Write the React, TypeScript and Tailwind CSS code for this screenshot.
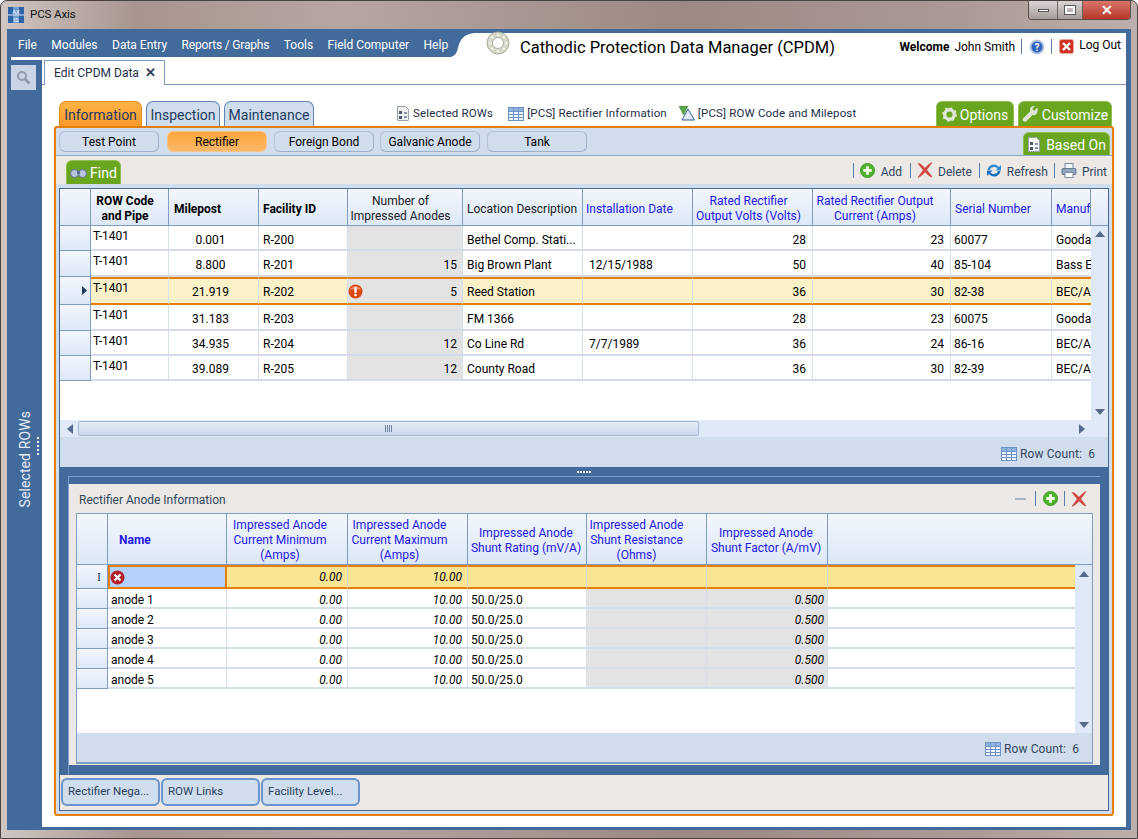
import { ReactNode } from "react";

const topCols = "grid grid-cols-[31px_78px_90px_89px_115px_120px_110px_120px_138px_101px_39px]";
const topHead = "grid grid-cols-[31px_78px_90px_89px_115px_120px_110px_120px_138px_101px_39px_17px]";
const lowCols = "grid grid-cols-[31px_119px_121px_120px_119px_120px_121px_247px]";
const lowHead = "grid grid-cols-[31px_119px_121px_120px_119px_120px_121px_264px]";

const headBg = "bg-[linear-gradient(#f2f6fd,#dde8f7)]";

function Tri({ dir, className = "" }: { dir: "up" | "down" | "left" | "right"; className?: string }) {
  const pts = { up: "0,7 5,1 10,7", down: "0,1 5,7 10,1", left: "8,0 8,10 2,5", right: "2,0 2,10 8,5" }[dir];
  return (
    <svg width="10" height="10" viewBox="0 0 10 10" className={className}>
      <polygon points={pts} fill="#56698a" />
    </svg>
  );
}

function GridIcon({ size = 16 }: { size?: number }) {
  return (
    <svg width={size} height={size - 2} viewBox="0 0 16 14">
      <rect x="0.5" y="0.5" width="15" height="13" fill="#eef4fc" stroke="#6f93c4" />
      <rect x="1" y="1" width="14" height="3" fill="#8fb4e0" />
      <path d="M5.5 1v12M10.5 1v12M1 4.5h14M1 7.5h14M1 10.5h14" stroke="#6f93c4" />
    </svg>
  );
}

function DocIcon({ light = false }: { light?: boolean }) {
  return (
    <svg width="14" height="15" viewBox="0 0 14 15">
      <path d="M1.5.5h8l3 3v11h-11z" fill={light ? "#f4f6f8" : "#eef0f2"} stroke="#9aa3ad" />
      <rect x="3" y="5" width="3" height="3" fill="#4d5a68" />
      <rect x="3" y="10" width="3" height="3" fill="#4d5a68" />
      <rect x="8" y="6" width="3" height="2" fill="#8b96a3" />
      <rect x="8" y="10" width="3" height="2" fill="#8b96a3" />
    </svg>
  );
}

function PlusIcon({ size = 15 }: { size?: number }) {
  return (
    <svg width={size} height={size} viewBox="0 0 16 16">
      <circle cx="8" cy="8" r="7.500" fill="#4fb02e" stroke="#3f9a26" />
      <path d="M8 3.500v9M3.500 8h9" stroke="#eefae6" strokeWidth="3" />
    </svg>
  );
}

function RedX({ size = 16 }: { size?: number }) {
  return (
    <svg width={size} height={size} viewBox="0 0 16 16">
      <path d="M1 1.500c2 0 3.500 1 7 4.800C10.500 3.500 12.500 1.500 15 .5c-1.500 2.500-3.500 5-5.300 7.300 2.200 2.700 3.900 5 5.300 7.200-2.200-.3-4-2-6.800-5C5.800 12.500 3.500 14.500 1 15.500 2.500 13 4.500 10.500 6.300 8 4.500 5.800 2.500 3.800 1 1.500z" fill="#d8483f" stroke="#b5352d" strokeWidth="0.5" />
    </svg>
  );
}

function RefreshIcon() {
  return (
    <svg width="16" height="15" viewBox="0 0 16 15" fill="none">
      <path d="M1.500 7C2 3.500 5 1.500 8 1.500c2.200 0 3.800 1 5 2.500L15 2v5.500H9.500l2-2C10.500 4.500 9.500 4 8 4 6 4 4.500 5.300 4 7z" fill="#2f8fdb" />
      <path d="M14.500 8c-.5 3.500-3.500 5.500-6.500 5.500-2.200 0-3.800-1-5-2.500L1 13V7.500h5.500l-2 2c1 1 2 1.500 3.500 1.500 2 0 3.500-1.300 4-3z" fill="#1c6fc0" />
    </svg>
  );
}

function PrintIcon() {
  return (
    <svg width="16" height="15" viewBox="0 0 16 15">
      <rect x="4" y="0.500" width="8" height="6" fill="#f2f4f7" stroke="#7d8ca3" />
      <rect x="1" y="5.500" width="14" height="6" rx="1" fill="#93a4bd" stroke="#66768f" />
      <rect x="4" y="9.500" width="8" height="5" fill="#fff" stroke="#7d8ca3" />
    </svg>
  );
}

function Logo() {
  const bolts = [0, 45, 90, 135, 180, 225, 270, 315];
  return (
    <svg width="24" height="24" viewBox="0 0 24 24">
      <circle cx="12" cy="12" r="11" fill="#d6d9c8" stroke="#a9ad9c" />
      <circle cx="12" cy="12" r="5.500" fill="#fff" stroke="#a9ad9c" />
      {bolts.map((a) => (
        <circle key={a} cx={12 + 8.200 * Math.cos((a * Math.PI) / 180)} cy={12 + 8.200 * Math.sin((a * Math.PI) / 180)} r="1.200" fill="#f4f5ee" />
      ))}
    </svg>
  );
}

function Sep({ className = "" }: { className?: string }) {
  return <span className={"w-px h-[15px] bg-[#5c7da8] " + className} />;
}

function MainTab({ label, active, w }: { label: string; active?: boolean; w: string }) {
  return (
    <div
      className={
        "h-[25px] pt-[2px] rounded-t-[7px] border border-b-0 text-[14px] flex items-center justify-center text-[#1d3a63] " +
        w +
        (active
          ? " border-[#e68a1c] bg-[linear-gradient(#ffb347,#fb9a2b)]"
          : " border-[#5e83b4] bg-[#d0dded]")
      }
    >
      {label}
    </div>
  );
}

function GreenTab({ w, children, h = "h-[24px]" }: { w: string; children: ReactNode; h?: string }) {
  return (
    <div className={"pt-[2px] rounded-t-[6px] bg-[#6aa51f] border border-b-0 border-[#8fbe52] text-white text-[14px] flex items-center justify-center gap-[3px] " + w + " " + h}>
      {children}
    </div>
  );
}

function SubButton({ label, active, ml }: { label: string; active?: boolean; ml: string }) {
  return (
    <div
      className={
        "w-[100px] h-[21px] pt-[1px] rounded-[6px] flex items-center justify-center text-[12px] text-black " +
        ml +
        (active
          ? " bg-[linear-gradient(#ffa63c,#fbb869)] border border-[#f5c78e]"
          : " bg-[#d0dded] border border-[#b4c3d8] border-r-[#9fb1c9] border-b-[#9fb1c9]")
      }
    >
      {label}
    </div>
  );
}

function BottomTab({ label }: { label: string }) {
  return (
    <div className="w-[99px] h-[28px] rounded-[6px] border-2 border-[#6a93cb] bg-[#d0dded] flex items-center pl-[5px] text-[11.500px] text-[#2c3f5c] whitespace-nowrap">
      {label}
    </div>
  );
}

function RowCount({ pr, pt }: { pr: string; pt: string }) {
  return (
    <div className={"h-[30px] bg-[#d0dded] flex items-center justify-end gap-[3px] text-[12px] text-[#33465f] " + pr + " " + pt}>
      <GridIcon />
      <span className="tracking-[0.1px]">Row Count:&nbsp; 6</span>
    </div>
  );
}

const topHeads: [string, string][] = [
  ["", ""],
  ["ROW Code\nand Pipe", "font-bold text-black justify-center text-center pr-[9px]"],
  ["Milepost", "font-bold text-black pl-[5px]"],
  ["Facility ID", "font-bold text-black pl-[4px]"],
  ["Number of\nImpressed Anodes", "text-[#222] justify-center text-center pr-[9px]"],
  ["Location Description", "text-[#222] pl-[4px] whitespace-nowrap"],
  ["Installation Date", "text-[#2418e8] pl-[3px]"],
  ["Rated Rectifier\nOutput Volts (Volts)", "text-[#2418e8] justify-center text-center pr-[8px]"],
  ["Rated Rectifier Output\nCurrent (Amps)", "text-[#2418e8] justify-center text-center pr-[13px]"],
  ["Serial Number", "text-[#2418e8] pl-[4px]"],
  ["Manuf", "text-[#2418e8] pl-[4px] overflow-hidden whitespace-nowrap"],
  ["", ""],
];

const topRows = [
  ["0.001", "R-200", "", "Bethel Comp. Stati...", "", "28", "23", "60077", "Gooda"],
  ["8.800", "R-201", "15", "Big Brown Plant", "12/15/1988", "50", "40", "85-104", "Bass Er"],
  ["21.919", "R-202", "5", "Reed Station", "", "36", "30", "82-38", "BEC/A"],
  ["31.183", "R-203", "", "FM 1366", "", "28", "23", "60075", "Gooda"],
  ["34.935", "R-204", "12", "Co Line Rd", "7/7/1989", "36", "24", "86-16", "BEC/A"],
  ["39.089", "R-205", "12", "County Road", "", "36", "30", "82-39", "BEC/A"],
];

const topHeights = ["h-[25px]", "h-[26px]", "h-[28px]", "h-[26px]", "h-[25px]", "h-[25px]"];
// text sits a pixel lower in the first rows of the reference
const topPads = ["pt-[4px] ", "pt-[4px] ", "pt-[2px] ", "pt-[4px] ", "pt-[2px] ", "pt-[2px] "];

function TopRow({ row, i }: { row: string[]; i: number }) {
  const sel = i === 2;
  const base = "flex items-center leading-[14px] overflow-hidden whitespace-nowrap border-r border-[#d5deeb] text-black " + topPads[i];
  const edge = sel ? "border-y-2 border-y-[#e67e0a] bg-[#fbf1c8] " : "border-b-2 border-b-[#d3dce8] bg-white ";
  const anode = sel ? "border-y-2 border-y-[#e67e0a] bg-[#e3e3e3] " : "border-b-2 border-b-[#d3dce8] bg-[#e3e3e3] ";
  return (
    <div className={topCols + " " + topHeights[i]}>
      <div className={headBg + " border-r border-b border-[#7f9cc3] flex items-center justify-end pr-[3px]"}>
        {sel && <svg width="5" height="9" viewBox="0 0 5 9"><polygon points="0,0 5,4.500 0,9" fill="#1d3a63" /></svg>}
      </div>
      <div className={"flex items-start overflow-hidden whitespace-nowrap border-r border-[#d5deeb] text-black pl-[2px] " + (sel ? "border-y-2 border-y-[#e67e0a] bg-[#fbf1c8]" : "border-b-2 border-b-[#d3dce8] bg-white pt-[1px]")}>T-1401</div>
      <div className={base + edge + "justify-center pr-[6px]"}>{row[0]}</div>
      <div className={base + edge + "pl-[4px]"}>{row[1]}</div>
      <div className={base + anode + "justify-end pr-[5px] relative"}>
        {sel && (
          <svg width="15" height="15" viewBox="0 0 15 15" className="absolute left-0 top-[5px]">
            <circle cx="7.500" cy="7.500" r="7" fill="#d9480f" />
            <path d="M2 5.500a6 6 0 0 1 11 0z" fill="#f0845a" />
            <rect x="6.300" y="3" width="2.400" height="6" rx="1" fill="#fff" />
            <circle cx="7.500" cy="11" r="1.300" fill="#fff" />
          </svg>
        )}
        {row[2]}
      </div>
      <div className={base + edge + "pl-[4px]"}>{row[3]}</div>
      <div className={base + edge + "pl-[6px]"}>{row[4]}</div>
      <div className={base + edge + "justify-end pr-[6px]"}>{row[5]}</div>
      <div className={base + edge + "justify-end pr-[6px]"}>{row[6]}</div>
      <div className={base + edge + "pl-[3px]"}>{row[7]}</div>
      <div className={base + edge + "pl-[4px] border-r-0"}>{row[8]}</div>
    </div>
  );
}

const lowHeads: [string, string][] = [
  ["", ""],
  ["Name", "font-bold pl-[11px] pt-[2px]"],
  ["Impressed Anode\nCurrent Minimum\n(Amps)", "justify-center text-center pr-[14px] pt-[2px]"],
  ["Impressed Anode\nCurrent Maximum\n(Amps)", "justify-center text-center pr-[16px] pt-[2px]"],
  ["Impressed Anode\nShunt Rating (mV/A)", "justify-center text-center pr-[2px] pt-[4px]"],
  ["Impressed Anode\nShunt Resistance\n(Ohms)", "justify-center text-center pr-[20px] pt-[2px]"],
  ["Impressed Anode\nShunt Factor (A/mV)", "justify-center text-center pr-[2px] pt-[4px]"],
  ["", ""],
];

function LowRow({ n }: { n: number }) {
  const c = "flex items-center leading-[14px] border-r border-b-2 border-[#d5deeb] text-black pt-[4px] ";
  return (
    <div className={lowCols + " h-[20px]"}>
      <div className={headBg + " border-r border-b border-[#7f9cc3]"} />
      <div className={c + "bg-white pl-[3px]"}>anode {n}</div>
      <div className={c + "bg-white justify-end pr-[5px] italic"}>0.00</div>
      <div className={c + "bg-white justify-end pr-[5px] italic"}>10.00</div>
      <div className={c + "bg-white pl-[3px]"}>50.0/25.0</div>
      <div className={c + "bg-[#e3e3e3]"} />
      <div className={c + "bg-[#e3e3e3] justify-end pr-[3px] italic"}>0.500</div>
      <div className={c + "bg-white border-r-0"} />
    </div>
  );
}

function ActiveRow() {
  const c = "flex items-center bg-[#f9e593] border-y-2 border-y-[#e67e0a] border-r border-r-[#cfd8e4] text-black italic ";
  return (
    <div className={lowCols + " h-[24px]"}>
      <div className={headBg + " border-r border-b border-[#7f9cc3] flex items-center justify-end pr-[6px] text-[12px] text-[#1d3a63] font-['Liberation_Serif',serif]"}>I</div>
      <div className="bg-[#b3d1fa] border-2 border-[#e67e0a] flex items-center">
        <svg width="15" height="15" viewBox="0 0 15 15">
          <circle cx="7.500" cy="7.500" r="7" fill="#b3202a" />
          <path d="M4.500 4.500l6 6M10.500 4.500l-6 6" stroke="#fff" strokeWidth="2.200" />
        </svg>
      </div>
      <div className={c + "justify-end pr-[5px]"}>0.00</div>
      <div className={c + "justify-end pr-[5px]"}>10.00</div>
      <div className={c} />
      <div className={c} />
      <div className={c} />
      <div className={c + "border-r-0"} />
    </div>
  );
}

export default function App() {
  return (
    <div className="w-[1138px] h-[839px] overflow-hidden rounded-t-[7px] border border-[#4a4240] flex flex-col text-[12px] font-['Roboto','Liberation_Sans',sans-serif] bg-[linear-gradient(90deg,#cfc6c3,#a8958f_12%,#b6a5a1_30%,#9c8984_60%,#ac9a96_85%,#bdb0ac)]">
      {/* Title bar */}
      <div className="h-[28px] flex items-start shrink-0">
        <svg width="16" height="16" viewBox="0 0 16 16" className="ml-[7px] mt-[6px]">
          <rect width="16" height="16" fill="#2c63a8" />
          <rect x="5" y="0" width="6" height="16" fill="#6f9ad0" />
          <path d="M0 8h16" stroke="#dfe8f4" />
          <text x="8" y="6.500" textAnchor="middle" fontSize="6" fill="#fff">AX</text>
          <text x="8" y="14.500" textAnchor="middle" fontSize="6" fill="#fff">IS</text>
        </svg>
        <span className="ml-[6px] mt-[5px] text-[11.500px] tracking-[-0.1px] text-[#111]">PCS Axis</span>
        <div className="ml-auto mr-[6px] w-[103px] h-[19px] flex rounded-b-[4px] overflow-hidden border border-t-0 border-[#5b4f4d]">
          <div className="w-[29px] bg-[linear-gradient(#d9d4d3,#a79d9b)] border-r border-[#6e6462] flex items-center justify-center">
            <span className="w-[11px] h-[3px] bg-white border border-[#555]" />
          </div>
          <div className="w-[25px] bg-[linear-gradient(#d9d4d3,#a79d9b)] border-r border-[#6e6462] flex items-center justify-center">
            <span className="w-[10px] h-[8px] bg-transparent border-2 border-white outline outline-[#555]" />
          </div>
          <div className="flex-1 bg-[linear-gradient(#d9766a,#b7362a)] flex items-center justify-center text-white font-bold text-[14px]">✕</div>
        </div>
      </div>

      {/* Window body */}
      <div className="ml-[6px] w-[1124px] h-[801px] shrink-0 bg-[#426a9b] pr-[5px] pb-[3px] flex flex-col">
        <div className="h-[28px] flex shrink-0">
          <nav className="w-[444px] pl-[11px] flex items-center gap-[14.500px] text-white text-[12px] pt-[3px]">
            {["File", "Modules", "Data Entry", "Reports / Graphs", "Tools", "Field Computer", "Help"].map((m) => (
              <span key={m} className={"whitespace-nowrap " + (m === "Reports / Graphs" ? "tracking-[-0.2px]" : "")}>{m}</span>
            ))}
          </nav>
          <div className="flex-1 flex mt-[4px] bg-white">
            <svg width="25" height="24" viewBox="0 0 25 24" className="shrink-0 -ml-px">
              <path d="M0 0h25C14 1 10 6 8 15c-1 5-4 9-8 9z" fill="#426a9b" />
            </svg>
            <div className="ml-[11px] -mt-[4px] pt-[2px] shrink-0"><Logo /></div>
            <div className="ml-[10px] text-[16.500px] text-black whitespace-nowrap pt-[3px]">Cathodic Protection Data Manager (CPDM)</div>
            <div className="ml-auto pr-[5px] flex items-center gap-[5px] h-[24px] text-[12px] text-black whitespace-nowrap pt-[3px]">
              <span className="font-bold">Welcome</span>
              <span>John Smith</span>
              <Sep className="ml-[1px]" />
              <svg width="16" height="16" viewBox="0 0 16 16" className="ml-[2px]">
                <circle cx="8" cy="8" r="7.500" fill="#b8c6dc" />
                <circle cx="8" cy="8" r="5.500" fill="#2f64c0" />
                <text x="8" y="11.500" textAnchor="middle" fontSize="10" fontWeight="700" fill="#fff">?</text>
              </svg>
              <Sep className="ml-px" />
              <svg width="15" height="15" viewBox="0 0 15 15" className="ml-[2px]">
                <rect x="0.500" y="0.500" width="14" height="14" rx="2" fill="#cf3527" stroke="#e9a79f" />
                <path d="M4 4l7 7M11 4l-7 7" stroke="#fff" strokeWidth="2.400" />
              </svg>
              <span className="-mt-[3px]">Log Out</span>
            </div>
          </div>
        </div>

        <div className="flex-1 flex min-h-0">
          {/* Sidebar */}
          <aside className="w-[35px] shrink-0 flex flex-col">
            <div className="h-[3px] ml-[4px] bg-white" />
            <div className="ml-[4px] mt-[5px] w-[25px] h-[25px] bg-[#c9d5e6] flex items-center justify-center">
              <svg width="15" height="15" viewBox="0 0 15 15" fill="none">
                <circle cx="6" cy="6" r="4" stroke="#8d9bad" strokeWidth="2" />
                <path d="M9 9l4.500 4.500" stroke="#8d9bad" strokeWidth="2.600" />
              </svg>
            </div>
            <div className="mt-[321px] flex">
              <span className="ml-[8px] w-[18px] [writing-mode:vertical-rl] rotate-180 text-[14px] tracking-[0.1px] text-[#e6edf7] whitespace-nowrap">Selected ROWs</span>
              <div className="ml-[4px] mt-[26px] flex flex-col gap-[2px]">
                {[0, 1, 2, 3, 4].map((d) => <span key={d} className="w-[2px] h-[2px] bg-white" />)}
              </div>
            </div>
          </aside>

          {/* Main */}
          <main className="flex-1 bg-white flex flex-col min-w-0">
            <div className="h-[28px] pt-[3px] border-b border-[#7f9cc3] shrink-0 pl-[2px]">
              <div className="w-[121px] h-[25px] border border-b-0 border-[#7f9cc3] bg-white flex items-center pl-[9px] pr-[8px] justify-between text-[12px] text-[#1d2f49]">
                <span>Edit CPDM Data</span>
                <span className="text-[13px] font-bold text-[#2b3e59]">✕</span>
              </div>
            </div>

            <div className="h-[16px] shrink-0" />

            {/* Tabs above the frame */}
            <div className="h-[25px] flex items-center shrink-0 pl-[17px] relative z-10">
              <MainTab label="Information" active w="w-[83px]" />
              <div className="w-[4px]" />
              <MainTab label="Inspection" w="w-[74px]" />
              <div className="w-[4px]" />
              <MainTab label="Maintenance" w="w-[90px]" />
              <div className="ml-[82px] flex items-center gap-[3px] text-[11.500px] tracking-[0.15px] text-[#1d2f49]">
                <DocIcon />
                <span>Selected ROWs</span>
                <span className="ml-[12px]"><GridIcon /></span>
                <span>[PCS] Rectifier Information</span>
                <svg width="16" height="15" viewBox="0 0 16 15" className="ml-[9px]">
                  <polygon points="0,0 9,0 4.500,9" fill="#5ca84a" stroke="#3d7f35" strokeWidth="0.600" />
                  <polygon points="9,3 15.500,14 3,14" fill="#dfe9f7" stroke="#3a5f94" />
                </svg>
                <span>[PCS] ROW Code and Milepost</span>
              </div>
              <div className="ml-auto mr-[14px] flex gap-[4px]">
                <GreenTab w="w-[78px]" h="h-[25px]">
                  <svg width="15" height="15" viewBox="0 0 15 15" className="-mt-[2px]">
                    <circle cx="7.500" cy="7.500" r="4.800" fill="none" stroke="#dfe6d8" strokeWidth="3.400" />
                    <circle cx="7.500" cy="7.500" r="6.500" fill="none" stroke="#dfe6d8" strokeWidth="1.800" strokeDasharray="2 3.100" />
                  </svg>
                  Options
                </GreenTab>
                <GreenTab w="w-[94px]" h="h-[25px]">
                  <svg width="17" height="17" viewBox="0 0 17 17" className="-mt-[2px]">
                    <path d="M15.500 1.500l-3 3-1.500-.5-.5-1.500 2.500-2.500c-2.500-.5-5 1-5 3.800 0 .6.100 1 .3 1.500L1.500 12c-1 1-1 2.300 0 3.200s2.300.8 3.100-.1l5.900-6c2.800.8 5.800-1.500 5-7.600z" fill="#dfe6d8" />
                  </svg>
                  Customize
                </GreenTab>
              </div>
            </div>

            {/* Orange frame */}
            <div className="ml-[12px] w-[1060px] h-[690px] shrink-0 border-2 border-[#e67e0a] rounded-[3px] bg-[#d0dded] flex flex-col">
              <div className="h-[27px] flex items-start pt-[3px] pl-[3px] shrink-0">
                <SubButton label="Test Point" ml="" />
                <SubButton label="Rectifier" active ml="ml-[8px]" />
                <SubButton label="Foreign Bond" ml="ml-[7px]" />
                <SubButton label="Galvanic Anode" ml="ml-[6px]" />
                <SubButton label="Tank" ml="ml-[7px]" />
                <div className="ml-auto mr-[2px] mt-[1px]">
                  <GreenTab w="w-[87px]" h="h-[23px]"><span className="-mt-[2px]"><DocIcon light /></span><span className="ml-[2px]">Based On</span></GreenTab>
                </div>
              </div>
              <div className="h-px bg-[#8ea6c6] shrink-0" />
              <div className="h-[28px] bg-[#ece8e6] flex items-end pl-[10px] pr-[5px] shrink-0 text-[12px] text-[#33465f]">
                <GreenTab w="w-[55px]">
                  <svg width="17" height="12" viewBox="0 0 17 12" className="-mt-[1px]">
                    <circle cx="4.500" cy="6.500" r="4" fill="#b9c6dc" stroke="#5b6f92" />
                    <circle cx="12.500" cy="6.500" r="4" fill="#b9c6dc" stroke="#5b6f92" />
                    <rect x="7" y="4" width="3" height="3" fill="#5b6f92" />
                  </svg>
                  Find
                </GreenTab>
                <div className="ml-auto h-[28px] flex items-center whitespace-nowrap">
                  <Sep />
                  <span className="ml-[6px] h-[15px]"><PlusIcon /></span>
                  <span className="ml-[6px] pt-[3px]">Add</span>
                  <Sep className="ml-[8px]" />
                  <span className="ml-[6px] h-[16px]"><RedX /></span>
                  <span className="ml-[5px] pt-[3px]">Delete</span>
                  <Sep className="ml-[7px]" />
                  <span className="ml-[6px] h-[15px]"><RefreshIcon /></span>
                  <span className="ml-[5px] pt-[3px]">Refresh</span>
                  <Sep className="ml-[6px]" />
                  <span className="ml-[6px] h-[15px]"><PrintIcon /></span>
                  <span className="ml-[5px] pt-[3px]">Print</span>
                </div>
              </div>

              {/* Content */}
              <div className="mx-[3px] mt-[4px] border border-[#4a6a95] flex-1 flex flex-col min-h-0 bg-[#ece8e6]">
                {/* Top grid */}
                <div className={topHead + " h-[37px] shrink-0 " + headBg}>
                  {topHeads.map(([t, c], i) => (
                    <div key={i} className={"flex items-center pt-[4px] leading-[15px] whitespace-pre-line border-r border-b border-[#7f9cc3] overflow-hidden " + (i === 11 ? "border-r-0 " : "") + c}>
                      {t}
                    </div>
                  ))}
                </div>
                <div className="h-[194px] shrink-0 flex bg-white">
                  <div className="w-[1031px]">
                    {topRows.map((r, i) => <TopRow key={i} row={r} i={i} />)}
                  </div>
                  <div className="w-[17px] bg-[#dfe9f7] flex flex-col items-center justify-between pt-[4px] pb-[2px]">
                    <Tri dir="up" />
                    <Tri dir="down" />
                  </div>
                </div>
                <div className="h-[17px] shrink-0 bg-[#dfe9f7] flex items-center pl-[5px]">
                  <Tri dir="left" />
                  <div className="ml-[3px] w-[621px] h-[15px] rounded-[2px] border border-[#a3b8d4] bg-[linear-gradient(#e4ecf7,#cbd9ec)] flex items-center justify-center">
                    <span className="w-[8px] h-[7px] bg-[repeating-linear-gradient(90deg,#6f83a0_0_1px,transparent_1px_2px)]" />
                  </div>
                  <Tri dir="right" className="ml-[378px]" />
                </div>
                <RowCount pr="pr-[13px]" pt="pt-[4px]" />

                {/* Splitter + anode panel */}
                <div className="h-[308px] shrink-0 bg-[#426a9b] flex flex-col">
                  <div className="h-[9px] flex items-center justify-center gap-[1px] shrink-0">
                    {[0, 1, 2, 3, 4].map((d) => <span key={d} className="w-[2px] h-[2px] bg-white" />)}
                  </div>
                  <div className="ml-[8px] mr-[8px] flex-1 border-l border-t border-[#7ea1cf] pt-[7px] pb-[10px] flex flex-col min-h-0">
                    <div className="flex-1 bg-[#ece8e6] flex flex-col min-h-0 px-[7px]">
                      <div className="h-[29px] shrink-0 flex items-center text-[12px] text-[#33465f] pl-[3px] pr-[6px]">
                        <span className="pt-[2px]">Rectifier Anode Information</span>
                        <span className="ml-auto w-[11px] h-[2px] bg-[#a9b4c4]" />
                        <Sep className="ml-[9px]" />
                        <span className="ml-[7px] h-[15px]"><PlusIcon /></span>
                        <Sep className="ml-[6px]" />
                        <span className="ml-[6px] h-[16px]"><RedX /></span>
                      </div>
                      <div className="h-[251px] shrink-0 border border-b-2 border-[#7f9cc3] flex flex-col">
                        <div className={lowHead + " h-[51px] shrink-0 " + headBg}>
                          {lowHeads.map(([t, c], i) => (
                            <div key={i} className={"flex items-center leading-[15px] whitespace-pre-line text-[#2418e8] border-r border-b border-[#7f9cc3] " + (i === 7 ? "border-r-0 " : "") + c}>
                              {t}
                            </div>
                          ))}
                        </div>
                        <div className="h-[168px] shrink-0 flex bg-white">
                          <div className="w-[998px]">
                            <ActiveRow />
                            {[1, 2, 3, 4, 5].map((n) => <LowRow key={n} n={n} />)}
                          </div>
                          <div className="w-[17px] bg-[#dfe9f7] flex flex-col items-center justify-between pt-[5px] pb-[2px]">
                            <Tri dir="up" />
                            <Tri dir="down" />
                          </div>
                        </div>
                        <RowCount pr="pr-[13px]" pt="pt-[2px]" />
                      </div>
                    </div>
                  </div>
                </div>

                {/* Bottom tabs */}
                <div className="flex-1 flex items-start gap-px pt-[3px] pl-[1px]">
                  <BottomTab label="Rectifier Nega..." />
                  <BottomTab label="ROW Links" />
                  <BottomTab label="Facility Level..." />
                </div>
              </div>
              <div className="h-[3px] shrink-0" />
            </div>
          </main>
        </div>
      </div>
    </div>
  );
}
